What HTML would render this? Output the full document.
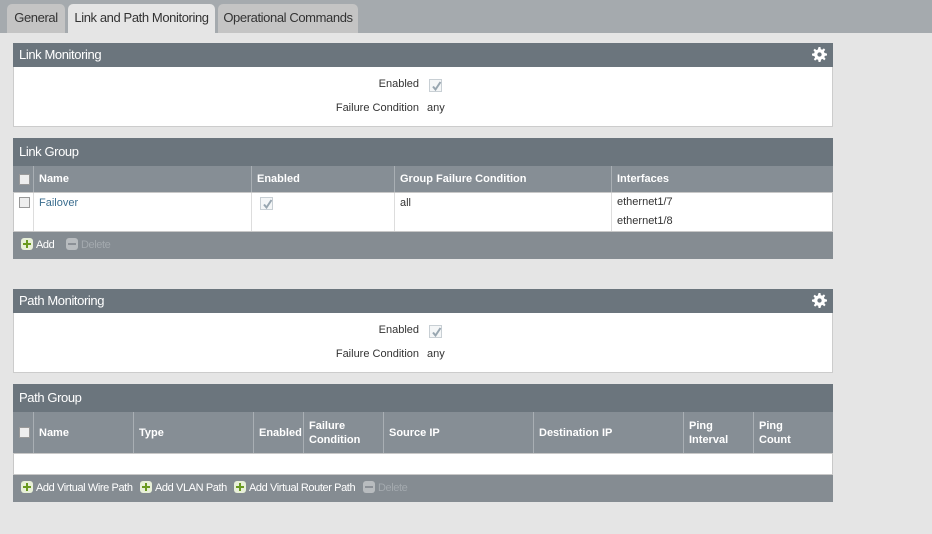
<!DOCTYPE html>
<html><head><style>
*{margin:0;padding:0;box-sizing:border-box}
body{width:932px;height:534px;background:#e5e5e5;font-family:"Liberation Sans",sans-serif;font-size:11px;color:#333;position:relative;overflow:hidden}
.chk{display:inline-block;width:13px;height:13px;border:1px solid #c8cfd4;background:#f4f6f7;position:relative}
.a{position:absolute}
.tabbar{left:0;top:0;width:932px;height:33px;background:#a5aaae}
.tab{top:4px;height:29px;background:#c4c4c4;border-radius:5px 5px 0 0;font-size:13px;color:#333;text-align:center;line-height:27px;letter-spacing:-0.4px}
.tab.on{background:#e5e5e5}
.hd{left:13px;width:820px;background:#6b757d;color:#fff;font-size:13px;padding-left:6px;letter-spacing:-0.4px}
.body{left:13px;width:820px;background:#fff;border:1px solid #ccc;border-top:none}
.th{left:13px;width:820px;background:#868e95;color:#fff;font-size:11px;font-weight:bold}
.col{position:absolute;top:0;bottom:0;border-left:1px solid #a9afb4;padding-left:5px;display:flex;align-items:center;line-height:14px}
.row{left:13px;width:820px;background:#fff;border:1px solid #c8c8c8}
.rcol{position:absolute;top:0;bottom:0;border-left:1px solid #ddd;padding-left:5px;padding-top:4px}
.ft{left:13px;width:820px;background:#858c92;color:#fff;font-size:11px;letter-spacing:-0.4px}
.ft>span.b{position:absolute;top:0;white-space:nowrap}
.cb{display:inline-block;width:11px;height:11px;background:#eee;border:1px solid #999}
.plus{display:inline-block;width:12px;height:12px;border-radius:3px;background:#e8f0d8;position:relative;vertical-align:-2px;margin-right:3px}
.plus:before{content:"";position:absolute;left:5px;top:2px;width:2px;height:8px;background:#6a9a20}
.plus:after{content:"";position:absolute;left:2px;top:5px;width:8px;height:2px;background:#6a9a20}
.minus{display:inline-block;width:12px;height:12px;border-radius:3px;background:#b8bcbf;position:relative;vertical-align:-2px;margin-right:3px}
.minus:after{content:"";position:absolute;left:2px;top:5px;width:8px;height:2px;background:#8b9096}
.lbl{font-size:11px;color:#333}
</style></head><body>
<div class="a tabbar"></div>
<div class="a tab" style="left:7px;width:58px">General</div>
<div class="a tab on" style="left:68px;width:147px">Link and Path Monitoring</div>
<div class="a tab" style="left:218px;width:140px">Operational Commands</div>

<svg width="0" height="0" style="position:absolute"><defs>
<symbol id="g" viewBox="0 0 16 16"><path fill="#fff" d="M7 0h2l.4 2.3 1.4.6 1.9-1.4 1.4 1.4-1.4 1.9.6 1.4L16 7v2l-2.3.4-.6 1.4 1.4 1.9-1.4 1.4-1.9-1.4-1.4.6L9 16H7l-.4-2.3-1.4-.6-1.9 1.4-1.4-1.4 1.4-1.9-.6-1.4L0 9V7l2.3-.4.6-1.4-1.4-1.9 1.4-1.4 1.9 1.4 1.4-.6z"/><circle cx="8" cy="8" r="2.3" fill="#6b757d"/></symbol>
<symbol id="c" viewBox="0 0 13 13"><path d="M3 6.5l2.5 3L10.5 2" stroke="#98a6b0" stroke-width="2" fill="none"/></symbol>
</defs></svg>

<!-- Link Monitoring -->
<div class="a hd" style="top:43px;height:24px;line-height:24px">Link Monitoring</div>
<svg class="a" style="left:812px;top:47px" width="15" height="15"><use href="#g"/></svg>
<div class="a body" style="top:67px;height:60px"></div>
<div class="a lbl" style="left:300px;width:119px;text-align:right;top:78px">Enabled</div>
<span class="a chk" style="left:429px;top:79px"><svg width="13" height="13" style="position:absolute;left:0;top:0"><use href="#c"/></svg></span>
<div class="a lbl" style="left:300px;width:119px;text-align:right;top:102px">Failure Condition</div>
<div class="a lbl" style="left:427px;top:102px">any</div>

<!-- Link Group -->
<div class="a hd" style="top:138px;height:28px;line-height:28px">Link Group</div>
<div class="a th" style="top:166px;height:26px">
<div class="col" style="left:0;width:20px;border-left:none"><span class="cb" style="margin-left:1px"></span></div>
<div class="col" style="left:20px">Name</div>
<div class="col" style="left:238px">Enabled</div>
<div class="col" style="left:381px">Group Failure Condition</div>
<div class="col" style="left:598px">Interfaces</div>
</div>
<div class="a row" style="top:192px;height:40px">
<div class="rcol" style="left:0;border:none"><span class="cb"></span></div>
<div class="rcol" style="left:19px;color:#3b6e8f;padding-top:4px">Failover</div>
<div class="rcol" style="left:237px;padding-left:8px"><span class="chk"><svg width="13" height="13" style="position:absolute;left:0;top:0"><use href="#c"/></svg></span></div>
<div class="rcol" style="left:380px">all</div>
<div class="rcol" style="left:597px;line-height:19px;padding-top:0">ethernet1/7<br>ethernet1/8</div>
</div>
<div class="a ft" style="top:232px;height:27px;line-height:27px">
<span class="b" style="left:8px"><span class="plus"></span>Add</span>
<span class="b" style="left:53px"><span class="minus"></span><span style="color:#a3a9ae">Delete</span></span>
</div>

<!-- Path Monitoring -->
<div class="a hd" style="top:289px;height:24px;line-height:24px">Path Monitoring</div>
<svg class="a" style="left:812px;top:293px" width="15" height="15"><use href="#g"/></svg>
<div class="a body" style="top:313px;height:60px"></div>
<div class="a lbl" style="left:300px;width:119px;text-align:right;top:324px">Enabled</div>
<span class="a chk" style="left:429px;top:325px"><svg width="13" height="13" style="position:absolute;left:0;top:0"><use href="#c"/></svg></span>
<div class="a lbl" style="left:300px;width:119px;text-align:right;top:348px">Failure Condition</div>
<div class="a lbl" style="left:427px;top:348px">any</div>

<!-- Path Group -->
<div class="a hd" style="top:384px;height:28px;line-height:28px">Path Group</div>
<div class="a th" style="top:412px;height:41px">
<div class="col" style="left:0;width:20px;border-left:none"><span class="cb" style="margin-left:1px"></span></div>
<div class="col" style="left:20px">Name</div>
<div class="col" style="left:120px">Type</div>
<div class="col" style="left:240px">Enabled</div>
<div class="col" style="left:290px">Failure<br>Condition</div>
<div class="col" style="left:370px">Source IP</div>
<div class="col" style="left:520px">Destination IP</div>
<div class="col" style="left:670px">Ping<br>Interval</div>
<div class="col" style="left:740px">Ping<br>Count</div>
</div>
<div class="a row" style="top:453px;height:22px"></div>
<div class="a ft" style="top:475px;height:27px;line-height:27px">
<span class="b" style="left:8px"><span class="plus"></span>Add Virtual Wire Path</span>
<span class="b" style="left:127px"><span class="plus"></span>Add VLAN Path</span>
<span class="b" style="left:221px"><span class="plus"></span>Add Virtual Router Path</span>
<span class="b" style="left:350px"><span class="minus"></span><span style="color:#a3a9ae">Delete</span></span>
</div>
</body></html>
